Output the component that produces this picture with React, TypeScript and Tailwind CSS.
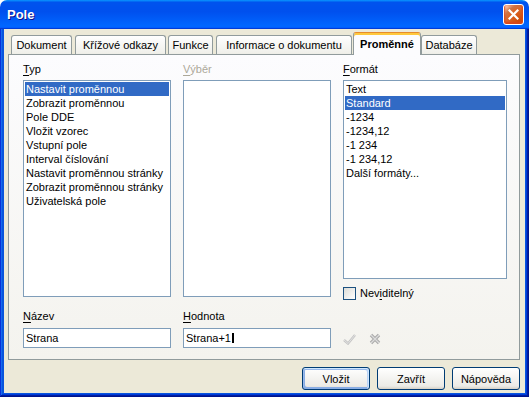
import type { ReactNode } from 'react';

const typItems = [
  'Nastavit proměnnou',
  'Zobrazit proměnnou',
  'Pole DDE',
  'Vložit vzorec',
  'Vstupní pole',
  'Interval číslování',
  'Nastavit proměnnou stránky',
  'Zobrazit proměnnou stránky',
  'Uživatelská pole',
];

const formatItems = ['Text', 'Standard', '-1234', '-1234,12', '-1 234', '-1 234,12', 'Další formáty...'];

const tabs = [
  { label: 'Dokument', cls: 'ml-[3px] w-[61px]' },
  { label: 'Křížové odkazy', cls: 'ml-[3px] w-[91px]' },
  { label: 'Funkce', cls: 'ml-[2px] w-[45px]' },
  { label: 'Informace o dokumentu', cls: 'ml-[3px] w-[136px]' },
  { label: 'Proměnné', cls: 'ml-px w-[68px]', selected: true },
  { label: 'Databáze', cls: 'w-[56px]' },
];

function Label({ first, rest, disabled }: { first: string; rest: string; disabled?: boolean }) {
  return (
    <div className={`h-[14px] ${disabled ? 'text-[#aca899]' : 'text-black'}`}>
      <span className="underline underline-offset-2">{first}</span>
      {rest}
    </div>
  );
}

function ListBox({ items, selected, className }: { items: string[]; selected?: number; className: string }) {
  return (
    <div className={`border border-[#7f9db9] bg-white p-px ${className}`}>
      {items.map((item, i) => (
        <div
          key={item}
          className={`h-[14px] whitespace-nowrap px-px ${i === selected ? 'bg-[#316ac5] text-white' : 'text-black'}`}
        >
          {item}
        </div>
      ))}
    </div>
  );
}

function Button({ children, isDefault }: { children: ReactNode; isDefault?: boolean }) {
  return (
    <div
      className={`flex h-[23px] w-[68px] items-center justify-center rounded-[3px] border border-[#003c74] bg-[linear-gradient(180deg,#fff,#ecebe6_86%,#d6d0c5)] text-black ${
        isDefault
          ? 'shadow-[inset_-1px_1px_#cee7ff,inset_1px_2px_#98b8ea,inset_-2px_2px_#bcd4f6,inset_1px_-1px_#89ade4,inset_2px_-2px_#89ade4]'
          : ''
      }`}
    >
      {children}
    </div>
  );
}

function Field({ children }: { children: ReactNode }) {
  return (
    <div className="flex h-[20px] w-[148px] items-center border border-[#7f9db9] bg-white px-[2px] text-black">
      {children}
    </div>
  );
}

export default function App() {
  return (
    <div className="h-[397px] w-[529px] bg-white font-[Liberation_Sans,Arial,sans-serif] text-[11px] leading-[14px]">
      <div className="flex h-full flex-col">
        {/* title bar */}
        <div className="flex h-[29px] shrink-0 items-center justify-between rounded-t-[7px] bg-[linear-gradient(180deg,#0997ff,#0053ee_8%,#0050ee_40%,#06f_88%,#06f_93%,#005bff_95%,#003dd7_96%,#003dd7)] pl-[7px] pr-[5px]">
          <span className="text-[13px] font-bold leading-[15px] text-white [text-shadow:1px_1px_#0f1089]">Pole</span>
          <div className="flex h-[21px] w-[21px] items-center justify-center rounded-[3px] border border-white bg-[radial-gradient(circle_at_90%_90%,#cc4600_0%,#dc6527_55%,#cd7546_70%,#ffccb2_90%,#fff_100%)] shadow-[inset_0_-1px_2px_1px_#da461a]">
            <svg width="11" height="11" viewBox="0 0 11 11">
              <path d="M1.5 1.5 L9.5 9.5 M9.5 1.5 L1.5 9.5" stroke="#fff" strokeWidth="2.2" strokeLinecap="square" />
            </svg>
          </div>
        </div>

        {/* frame */}
        <div className="flex min-h-0 flex-1 flex-col bg-[#0855dd] px-[4px] pb-[4px] shadow-[inset_-1px_-1px_#00138c,inset_1px_0_#0831d9,inset_-2px_-2px_#001ea0,inset_2px_0_#166aee,inset_-3px_-3px_#003bda,inset_3px_0_#0855dd]">
          <div className="flex flex-1 flex-col bg-[#ece9d8] pl-[4px] pr-[5px] pt-[3px]">
            {/* tabs */}
            <div className="flex h-[22px] items-end pl-[0px]">
              {tabs.map((t) =>
                t.selected ? (
                  <div
                    key={t.label}
                    className={`relative z-10 -mb-px flex h-[23px] items-center justify-center rounded-t-[3px] border-x border-t border-x-[#919b9c] border-t-[#e68b2c] bg-[#fcfcfe] font-bold text-black shadow-[inset_0_2px_#ffc83c] ${t.cls}`}
                  >
                    {t.label}
                  </div>
                ) : (
                  <div
                    key={t.label}
                    className={`flex h-[19px] items-center justify-center rounded-t-[3px] border-x border-t border-[#919b9c] bg-[linear-gradient(180deg,#fff,#fafaf9_26%,#f0f0ea_95%,#ecebe5)] text-black ${t.cls}`}
                  >
                    {t.label}
                  </div>
                ),
              )}
            </div>

            {/* tab page */}
            <div className="flex h-[306px] flex-col border border-[#919b9c] bg-[linear-gradient(180deg,#fcfcfe,#f4f3ee)] pb-[12px] pl-[14px] pt-[7px]">
              <div className="flex gap-[12px]">
                <div className="flex w-[148px] flex-col gap-[4px]">
                  <Label first="T" rest="yp" />
                  <ListBox items={typItems} selected={0} className="h-[217px]" />
                </div>
                <div className="flex w-[148px] flex-col gap-[4px]">
                  <Label first="V" rest="ýběr" disabled />
                  <ListBox items={[]} className="h-[217px]" />
                </div>
                <div className="flex w-[164px] flex-col gap-[4px]">
                  <Label first="F" rest="ormát" />
                  <ListBox items={formatItems} selected={1} className="h-[199px]" />
                  <div className="mt-[3px] flex items-center gap-[4px]">
                    <div className="h-[13px] w-[13px] border border-[#1c5180] bg-[linear-gradient(135deg,#dcdcd7,#fff)]" />
                    <span className="text-black">
                      Nev<span className="underline underline-offset-2">i</span>ditelný
                    </span>
                  </div>
                </div>
              </div>

              <div className="mt-[9px] flex items-end gap-[12px]">
                <div className="flex flex-col gap-[5px]">
                  <Label first="N" rest="ázev" />
                  <Field>Strana</Field>
                </div>
                <div className="flex flex-col gap-[5px]">
                  <Label first="H" rest="odnota" />
                  <Field>
                    Strana+1
                    <span className="ml-px inline-block h-[10px] w-[2px] bg-black" />
                  </Field>
                </div>
                <div className="flex h-[20px] items-center gap-[13px] pt-[2px]">
                  <svg width="13" height="11" viewBox="0 0 13 11">
                    <path d="M1 6 L5 9.5 L12 1" fill="none" stroke="#c4c4c4" strokeWidth="2.4" />
                    <path d="M1 6 L5 9.5 L12 1" fill="none" stroke="#e4e4e4" strokeWidth="0.9" />
                  </svg>
                  <svg width="12" height="12" viewBox="0 0 12 12">
                    <path d="M2 2 L10 10 M10 2 L2 10" stroke="#aaaaaa" strokeWidth="3.4" />
                    <path d="M2 2 L10 10 M10 2 L2 10" stroke="#dcdcdc" strokeWidth="1.2" />
                  </svg>
                </div>
              </div>
            </div>

            {/* buttons */}
            <div className="mt-[7px] flex justify-end gap-[7px]">
              <Button isDefault>Vložit</Button>
              <Button>Zavřít</Button>
              <Button>Nápověda</Button>
            </div>
          </div>
        </div>
      </div>
    </div>
  );
}
